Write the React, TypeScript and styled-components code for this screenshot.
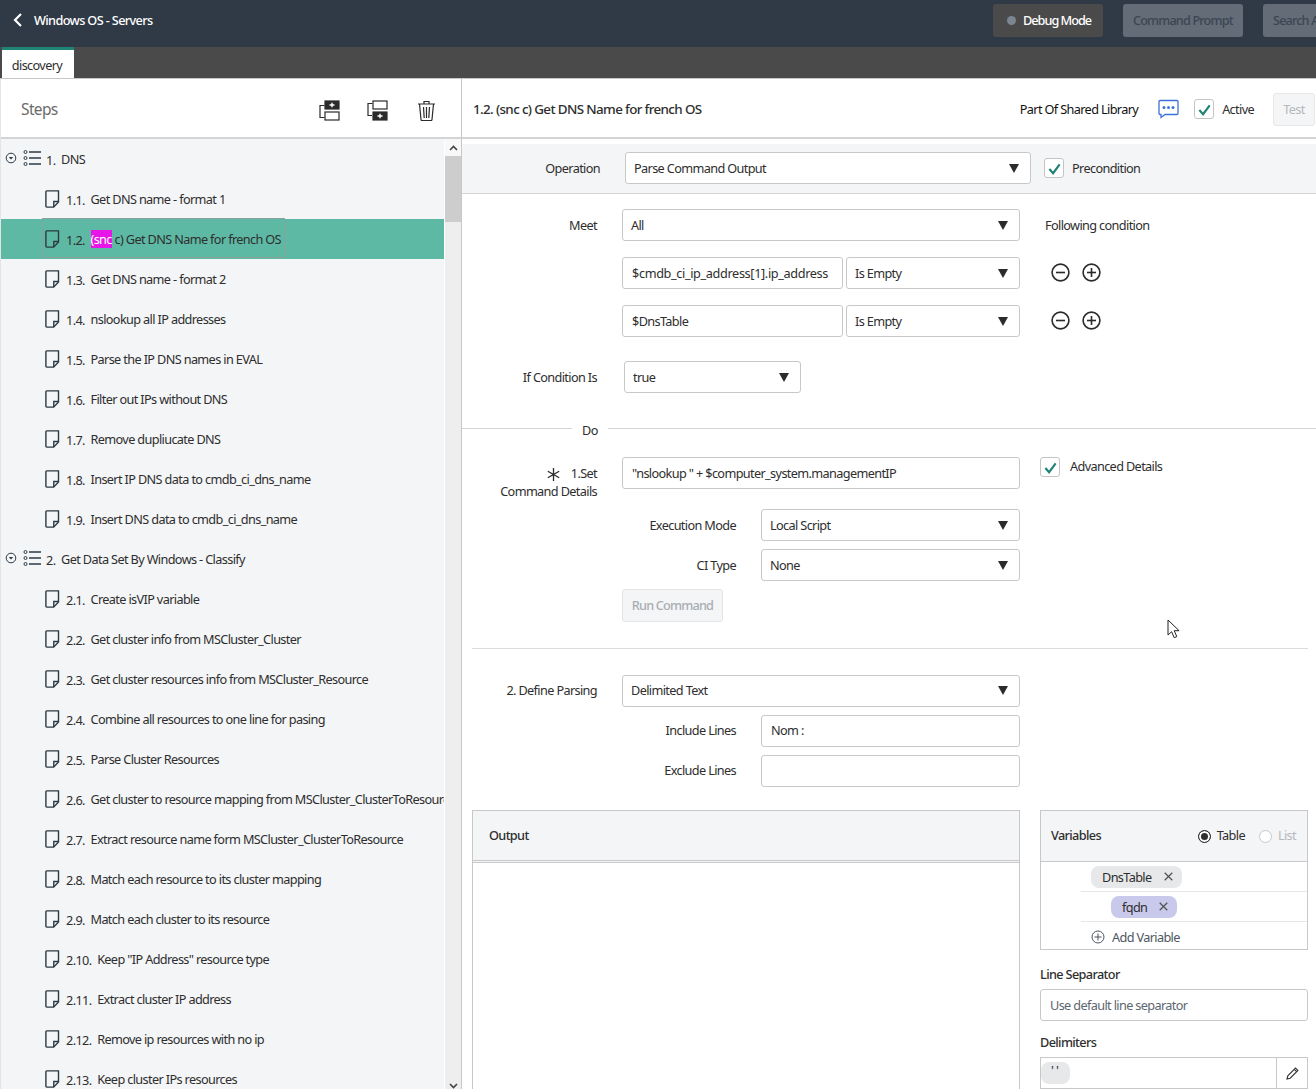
import { createGlobalStyle, styled } from "styled-components";
import { ReactNode } from "react";

const GlobalStyle = createGlobalStyle`
  html, body {
    margin: 0;
    height: 1089px;
    overflow: hidden;
    background: #fff;
  }
  body {
    font-family: "Noto Sans", "Liberation Sans", sans-serif;
    font-size: 12.7px;
    letter-spacing: -0.63px;
    color: #2e2e2e;
  }
  * { box-sizing: border-box; }
`;

const Page = styled.div`
  width: 1316px;
  height: 1089px;
  display: flex;
  flex-direction: column;
  overflow: hidden;
  position: relative;
`;

const TopBar = styled.header`
  height: 47px;
  flex: none;
  background: #303a46;
  display: flex;
  align-items: center;
  padding: 0 0 7px 13px;
  overflow: hidden;
`;

const BackLink = styled.a`
  width: 980px;
  flex: none;
  display: flex;
  align-items: center;
  gap: 12px;
  color: #fff;
  font-weight: 500;
`;

const DebugButton = styled.button`
  width: 110px;
  height: 33px;
  flex: none;
  margin-right: 20px;
  padding: 0 0 0 14px;
  background: #4a4a4a;
  border: 0;
  border-radius: 3px;
  color: #fff;
  font: inherit;
  font-weight: 500;
  letter-spacing: -1px;
  display: flex;
  align-items: center;
  gap: 7px;
`;

const Dot = styled.span`
  width: 9px;
  height: 9px;
  border-radius: 50%;
  background: #7c8591;
`;

const DimButton = styled.button`
  width: 120px;
  height: 33px;
  flex: none;
  margin-right: 20px;
  background: #636c77;
  border: 0;
  border-radius: 3px;
  color: #3c4652;
  font: inherit;
  font-weight: 500;
  letter-spacing: -0.85px;
  white-space: nowrap;
  overflow: hidden;
  text-align: left;
  padding: 0 10px;
`;

const TabStrip = styled.nav`
  height: 32px;
  flex: none;
  background: #4a4a4a;
  border-bottom: 1px solid #c8c8c8;
  padding-left: 2px;
`;

const Tab = styled.div`
  width: 72px;
  height: 31px;
  padding-right: 2px;
  background: #fff;
  border-top: 3px solid #1f8476;
  text-align: center;
  line-height: 30px;
  color: #2e2e2e;
`;

const Main = styled.div`
  flex: 1;
  min-height: 0;
  display: flex;
`;

const LeftPane = styled.aside`
  width: 462px;
  flex: none;
  display: flex;
  flex-direction: column;
  border-left: 1px solid #e4e4e4;
  border-right: 1px solid #c8c8c8;
`;

const PaneHead = styled.div`
  height: 60px;
  flex: none;
  padding-top: 2px;
  background: #fff;
  border-bottom: 2px solid #d4d4d4;
  display: flex;
  align-items: center;
`;

const StepsTitle = styled.h2`
  margin: 0 auto 0 20px;
  font-size: 15.5px;
  font-weight: 400;
  color: #6b6b6b;
`;

const HeadIcon = styled.span`
  width: 48px;
  display: flex;
  justify-content: center;
  position: relative;
  top: 1px;
  left: -1px;
  &:last-child { margin-right: 11px; left: 0; }
`;

const StepsBody = styled.div`
  flex: 1;
  min-height: 0;
  display: flex;
`;

const StepList = styled.ul`
  flex: 1;
  min-width: 0;
  margin: 0;
  padding: 0;
  list-style: none;
  background: #f4f5f7;
  overflow: hidden;
`;

const GroupRow = styled.li`
  height: 40px;
  display: flex;
  align-items: center;
  padding-left: 4px;
  white-space: nowrap;
  & > svg:first-child { margin-right: 6px; margin-top: -2px; }
  & > svg + svg { margin-right: 5px; margin-top: -2px; }
`;

const StepRow = styled.li<{ $selected?: boolean }>`
  height: 40px;
  display: flex;
  align-items: center;
  padding-left: 44px;
  white-space: nowrap;
  background: ${(p) => (p.$selected ? "#5eb9a4" : "transparent")};
  position: relative;
  & > svg { margin-right: 6px; flex: none; }
`;

const FocusRing = styled.span`
  position: absolute;
  left: 41px;
  top: -1px;
  width: 243px;
  height: 40px;
  border: 1px solid #8aa29d;
`;

const StepNum = styled.span`
  margin-right: 3px;
  position: relative;
  top: 1px;
`;

const Hit = styled.mark`
  background: #e815e8;
  color: #fff;
`;

const ScrollTrack = styled.div`
  width: 17px;
  height: calc(100% + 5px);
  flex: none;
  border-left: 1px solid #fff;
  background: #eeeeee;
  display: flex;
  flex-direction: column;
`;

const ScrollArrow = styled.span<{ $top?: boolean }>`
  height: 17px;
  flex: none;
  background: ${(p) => (p.$top ? "#f8f8f8" : "transparent")};
  display: flex;
  align-items: center;
  justify-content: center;
`;

const ScrollThumb = styled.span`
  height: 66px;
  flex: none;
  background: #cdcdcd;
`;

const ScrollRest = styled.span`
  flex: 1;
`;

const RightPane = styled.section`
  flex: 1;
  min-width: 0;
  display: flex;
  flex-direction: column;
  overflow: hidden;
`;

const DetailTitle = styled.h1`
  margin: 0 auto 0 11px;
  font-size: 13.4px;
  font-weight: 500;
  color: #2e2e2e;
`;

const SharedLabel = styled.span`
  color: #111;
  margin-right: 20px;
`;

const CheckBox = styled.span<{ $left?: number }>`
  width: 20px;
  height: 20px;
  flex: none;
  margin-left: ${(p) => p.$left ?? 0}px;
  border: 1px solid #c4c4c4;
  border-radius: 3px;
  background: #fff;
  display: inline-flex;
  align-items: center;
  justify-content: center;
`;

const ActiveLabel = styled.span`
  margin: 0 19px 0 8px;
`;

const TestButton = styled.button`
  width: 42px;
  height: 33px;
  flex: none;
  margin-right: 1px;
  background: #f4f5f7;
  border: 1px solid #e8e8e8;
  border-radius: 3px;
  color: #b5b8bc;
  font: inherit;
  letter-spacing: inherit;
`;

const OperationBar = styled.div`
  height: 50px;
  flex: none;
  margin-top: 5px;
  background: #f4f5f7;
  border-bottom: 1px solid #d4d4d4;
  display: flex;
  align-items: center;
  padding-bottom: 1px;
`;

const OpLabel = styled.label`
  width: 138px;
  margin-right: 25px;
  text-align: right;
  flex: none;
`;

const Box = styled.div<{ $w: number; $gap?: number }>`
  width: ${(p) => p.$w}px;
  height: 32px;
  flex: none;
  margin-left: ${(p) => p.$gap ?? 0}px;
  background: #fff;
  border: 1px solid #c8c8c8;
  border-radius: 3px;
  padding: 0 9px;
  display: flex;
  align-items: center;
  justify-content: space-between;
  white-space: nowrap;
  overflow: hidden;
`;

const SelectBox = styled(Box)`
  padding: 0 11px 0 8px;
`;

const LongValue = styled.span`
  letter-spacing: -0.36px;
`;

const Form = styled.div`
  padding-top: 15px;
`;

const Row = styled.div<{ $top?: number }>`
  display: flex;
  align-items: center;
  height: 32px;
  margin-top: ${(p) => p.$top ?? 0}px;
`;

const Label = styled.label<{ $gap?: number }>`
  width: 135px;
  flex: none;
  margin-right: ${(p) => p.$gap ?? 25}px;
  text-align: right;
`;

const SubLabel = styled(Label)`
  width: 274px;
`;

const TrailText = styled.span<{ $left?: number }>`
  margin-left: ${(p) => p.$left ?? 25}px;
`;

const RoundIcons = styled.span`
  margin: -2px 0 0 31px;
  display: flex;
  gap: 12px;
`;

const DoDivider = styled.div`
  margin-top: 35px;
  height: 1px;
  background: #d4d4d4;
  position: relative;
`;

const DoText = styled.span`
  position: absolute;
  left: 110px;
  top: -7px;
  padding: 0 10px;
  background: #fff;
`;

const SetRow = styled.div`
  display: flex;
  height: 48px;
  margin-top: 28px;
`;

const SetLabel = styled.div`
  width: 135px;
  margin-right: 25px;
  flex: none;
  text-align: right;
  line-height: 18px;
  padding-top: 7px;
`;

const Required = styled.svg`
  margin-right: 11px;
  vertical-align: -3px;
`;

const AdvancedCheck = styled.span`
  margin-left: 20px;
  display: flex;
  gap: 10px;
  height: 22px;
  align-items: flex-start;
`;

const RunButton = styled.button`
  display: block;
  width: 101px;
  height: 33px;
  margin: 8px 0 0 160px;
  padding-bottom: 2px;
  background: #f4f5f7;
  border: 1px solid #e4e4e4;
  border-radius: 3px;
  color: #a9adb2;
  font: inherit;
  font-weight: 500;
  letter-spacing: -0.8px;
`;

const Rule = styled.hr`
  margin: 26px 8px 26px 10px;
  border: 0;
  height: 1px;
  background: #dcdcdc;
`;

const ParsingRows = styled.div`
  & label, & ${Box} { padding-bottom: 2px; }
`;

const Bottom = styled.div`
  margin: 23px 8px 0 10px;
  display: grid;
  grid-template-columns: 548px 268px;
  column-gap: 20px;
`;

const OutputPanel = styled.div`
  height: 290px;
  border: 1px solid #c8c8c8;
`;

const OutputHead = styled.div`
  height: 52px;
  padding: 0 0 1px 16px;
  background: #f4f5f7;
  border-bottom: 3px double #c8c8c8;
  display: flex;
  align-items: center;
  font-weight: 500;
`;

const SideColumn = styled.div`
  display: flex;
  flex-direction: column;
`;

const VarPanel = styled.div`
  height: 140px;
  border: 1px solid #c8c8c8;
`;

const VarHead = styled.div`
  height: 51px;
  padding: 0 11px 2px 10px;
  background: #f4f5f7;
  border-bottom: 1px solid #c8c8c8;
  display: flex;
  align-items: center;
  font-weight: 500;
`;

const RadioGroup = styled.span`
  margin-left: auto;
  display: flex;
  align-items: center;
  gap: 6px;
  font-weight: 400;
`;

const Radio = styled.span<{ $on?: boolean }>`
  width: 13px;
  height: 13px;
  margin-top: 2px;
  margin-left: ${(p) => (p.$on ? 0 : 8)}px;
  border-radius: 50%;
  background: ${(p) => (p.$on ? "#2e2e2e" : "#fff")};
  border: 1px solid ${(p) => (p.$on ? "#2e2e2e" : "#c8c8c8")};
  box-shadow: ${(p) => (p.$on ? "inset 0 0 0 2px #fff" : "none")};
`;

const MutedText = styled.span`
  color: #b5b8bc;
`;

const VarRow = styled.div<{ $indent: number }>`
  height: 30px;
  margin-left: 40px;
  padding-left: ${(p) => p.$indent}px;
  border-bottom: 1px solid #e6e6e6;
  display: flex;
  align-items: center;
`;

const Chip = styled.span<{ $color: string }>`
  height: 22px;
  padding: 0 9px 0 11px;
  border-radius: 8px;
  background: ${(p) => p.$color};
  display: inline-flex;
  align-items: center;
  gap: 12px;
`;

const AddRow = styled.div`
  margin-left: 50px;
  height: 29px;
  display: flex;
  align-items: center;
  gap: 7px;
  color: #4d5661;
`;

const FieldLabel = styled.div<{ $top: number }>`
  margin-top: ${(p) => p.$top}px;
  height: 18px;
  line-height: 18px;
  font-weight: 500;
`;

const LineInput = styled.div`
  margin-top: 6px;
  height: 32px;
  padding-left: 9px;
  border: 1px solid #c8c8c8;
  border-radius: 3px;
  display: flex;
  align-items: center;
  color: #5c6670;
`;

const DelimBox = styled.div`
  margin-top: 6px;
  height: 32px;
  border: 1px solid #c8c8c8;
  display: flex;
  align-items: center;
`;

const DelimChip = styled.span`
  width: 29px;
  height: 22px;
  border-radius: 8px;
  background: #e6e8ea;
  padding-left: 10px;
  line-height: 16px;
`;

const DelimEdit = styled.span`
  margin-left: auto;
  width: 31px;
  height: 100%;
  border-left: 1px solid #c8c8c8;
  display: flex;
  align-items: center;
  justify-content: center;
`;

const Pointer = styled.svg`
  position: absolute;
  left: 1167px;
  top: 619px;
`;

const Caret = () => (
  <svg width="10" height="9" viewBox="0 0 10 9">
    <path d="M0 0h10L5 9z" fill="#2b2b2b" />
  </svg>
);

const Check = () => (
  <svg width="15" height="15" viewBox="0 0 16 16" fill="none">
    <path d="M2.5 8.5 6.5 13 13.5 3.5" stroke="#1f8476" strokeWidth="2.3" />
  </svg>
);

const DocIcon = () => (
  <svg width="15" height="18" viewBox="0 0 15 18" fill="none" stroke="#2c3a44" strokeWidth="1.4">
    <path d="M1.7.9h11.8v11l-4.8 5.2H1.7a.8.8 0 0 1-.8-.8V1.7a.8.8 0 0 1 .8-.8z" />
    <path d="M13.5 11.5H8.8V17" />
  </svg>
);

const ExpandIcon = () => (
  <svg width="12" height="12" viewBox="0 0 12 12" fill="none">
    <circle cx="6" cy="6" r="4.8" stroke="#2c3a44" />
    <path d="M3.8 5h4.4L6 7.6z" fill="#2c3a44" />
  </svg>
);

const ListIcon = () => (
  <svg width="18" height="16" viewBox="0 0 18 16" fill="none" stroke="#2c3a44">
    <circle cx="2.5" cy="2" r="1.5" />
    <circle cx="2.5" cy="8" r="1.5" />
    <circle cx="2.5" cy="14" r="1.5" />
    <path d="M6 2h12M6 8h12M6 14h12" strokeWidth="1.6" />
  </svg>
);

const InsertIcon = ({ below }: { below?: boolean }) => (
  <svg width="21" height="21" viewBox="0 0 21 21" fill="none" stroke="#2b2b2b" strokeWidth="1.2">
    <path d={below ? "M5.5 3.5H1v12h4" : "M5.5 5.5H1v12h4.5"} />
    {below ? (
      <>
        <rect x="6" y="1" width="14" height="8" fill="#fff" />
        <rect x="6" y="12" width="14" height="8" fill="#2b2b2b" />
        <path d="M10.5 16h5M13 13.8v4.4" stroke="#fff" strokeWidth="1.4" />
      </>
    ) : (
      <>
        <rect x="6" y="1" width="14" height="8" fill="#2b2b2b" />
        <rect x="6" y="12" width="14" height="8" fill="#fff" />
        <path d="M10.5 5h5M13 2.8v4.4" stroke="#fff" strokeWidth="1.4" />
      </>
    )}
  </svg>
);

const TrashIcon = () => (
  <svg width="19" height="21" viewBox="0 0 19 21" fill="none" stroke="#2b2b2b" strokeWidth="1.2">
    <path d="M1 4h17M7 4V1.5h5V4" />
    <path d="M2.5 4 4 19.5a1 1 0 0 0 1 1h9a1 1 0 0 0 1-1L16.5 4" />
    <path d="M6.5 7l.7 11M9.5 7v11M12.5 7l-.7 11" />
  </svg>
);

const CommentIcon = () => (
  <svg width="21" height="20" viewBox="0 0 21 20" fill="none">
    <path
      d="M2 1.5h17a1 1 0 0 1 1 1v12a1 1 0 0 1-1 1H7L3 18.5v-3H2a1 1 0 0 1-1-1v-12a1 1 0 0 1 1-1z"
      stroke="#3f72d8"
      strokeWidth="1.3"
    />
    <circle cx="6" cy="8.5" r="1.5" fill="#3f72d8" />
    <circle cx="10.5" cy="8.5" r="1.5" fill="#3f72d8" />
    <circle cx="15" cy="8.5" r="1.5" fill="#3f72d8" />
  </svg>
);

const RoundIcon = ({ plus }: { plus?: boolean }) => (
  <svg width="19" height="19" viewBox="0 0 19 19" fill="none" stroke="#2b2b2b" strokeWidth="1.6">
    <circle cx="9.5" cy="9.5" r="8.4" />
    <path d="M5 9.5h9" />
    {plus && <path d="M9.5 5v9" />}
  </svg>
);

const CloseIcon = () => (
  <svg width="9" height="9" viewBox="0 0 9 9" stroke="#555" strokeWidth="1.3">
    <path d="M.7.7l7.6 7.6M8.3.7.7 8.3" />
  </svg>
);

const PencilIcon = () => (
  <svg width="13" height="13" viewBox="0 0 13 13" fill="none" stroke="#333" strokeWidth="1.1">
    <path d="M1 12l.8-3.2L9.5 1.1l2.4 2.4-7.7 7.7zM8.3 2.4l2.4 2.4" />
  </svg>
);

const Select = ({ w, gap, children }: { w: number; gap?: number; children: ReactNode }) => (
  <SelectBox $w={w} $gap={gap}>
    {children}
    <Caret />
  </SelectBox>
);

const groups = [
  {
    num: "1.",
    name: "DNS",
    steps: [
      "Get DNS name - format 1",
      "c) Get DNS Name for french OS",
      "Get DNS name - format 2",
      "nslookup all IP addresses",
      "Parse the IP DNS names in EVAL",
      "Filter out IPs without DNS",
      "Remove dupliucate DNS",
      "Insert IP DNS data to cmdb_ci_dns_name",
      "Insert DNS data to cmdb_ci_dns_name",
    ],
  },
  {
    num: "2.",
    name: "Get Data Set By Windows - Classify",
    steps: [
      "Create isVIP variable",
      "Get cluster info from MSCluster_Cluster",
      "Get cluster resources info from MSCluster_Resource",
      "Combine all resources to one line for pasing",
      "Parse Cluster Resources",
      "Get cluster to resource mapping from MSCluster_ClusterToResource",
      "Extract resource name form MSCluster_ClusterToResource",
      "Match each resource to its cluster mapping",
      "Match each cluster to its resource",
      'Keep "IP Address" resource type',
      "Extract cluster IP address",
      "Remove ip resources with no ip",
      "Keep cluster IPs resources",
    ],
  },
];

export default function App() {
  return (
    <>
      <GlobalStyle />
      <Page>
        <TopBar>
          <BackLink>
            <svg width="9" height="14" viewBox="0 0 9 14" fill="none" stroke="#fff" strokeWidth="2.2">
              <path d="M8 1 2 7l6 6" />
            </svg>
            Windows OS - Servers
          </BackLink>
          <DebugButton>
            <Dot />
            Debug Mode
          </DebugButton>
          <DimButton>Command Prompt</DimButton>
          <DimButton>Search Artifacts</DimButton>
        </TopBar>
        <TabStrip>
          <Tab>discovery</Tab>
        </TabStrip>
        <Main>
          <LeftPane>
            <PaneHead>
              <StepsTitle>Steps</StepsTitle>
              <HeadIcon>
                <InsertIcon />
              </HeadIcon>
              <HeadIcon>
                <InsertIcon below />
              </HeadIcon>
              <HeadIcon>
                <TrashIcon />
              </HeadIcon>
            </PaneHead>
            <StepsBody>
              <StepList>
                {groups.map((g) => (
                  <div key={g.num}>
                    <GroupRow>
                      <ExpandIcon />
                      <ListIcon />
                      <StepNum>{g.num}</StepNum>&nbsp;{g.name}
                    </GroupRow>
                    {g.steps.map((s, i) => {
                      const selected = g.num === "1." && i === 1;
                      return (
                        <StepRow key={s} $selected={selected}>
                          {selected && <FocusRing />}
                          <DocIcon />
                          <StepNum>
                            {g.num}
                            {i + 1}.
                          </StepNum>
                          &nbsp;
                          {selected && (
                            <>
                              <Hit>(snc</Hit>&nbsp;
                            </>
                          )}
                          {s}
                        </StepRow>
                      );
                    })}
                  </div>
                ))}
              </StepList>
              <ScrollTrack>
                <ScrollArrow $top>
                  <svg width="9" height="6" viewBox="0 0 9 6" fill="none" stroke="#444" strokeWidth="1.6">
                    <path d="M1 5l3.5-3.5L8 5" />
                  </svg>
                </ScrollArrow>
                <ScrollThumb />
                <ScrollRest />
                <ScrollArrow>
                  <svg width="9" height="6" viewBox="0 0 9 6" fill="none" stroke="#444" strokeWidth="1.6">
                    <path d="M1 1l3.5 3.5L8 1" />
                  </svg>
                </ScrollArrow>
              </ScrollTrack>
            </StepsBody>
          </LeftPane>
          <RightPane>
            <PaneHead>
              <DetailTitle>1.2. (snc c) Get DNS Name for french OS</DetailTitle>
              <SharedLabel>Part Of Shared Library</SharedLabel>
              <CommentIcon />
              <CheckBox $left={15}>
                <Check />
              </CheckBox>
              <ActiveLabel>Active</ActiveLabel>
              <TestButton>Test</TestButton>
            </PaneHead>
            <OperationBar>
              <OpLabel>Operation</OpLabel>
              <Select w={406}>Parse Command Output</Select>
              <CheckBox $left={13}>
                <Check />
              </CheckBox>
              <TrailText $left={8}>Precondition</TrailText>
            </OperationBar>
            <Form>
              <Row>
                <Label>Meet</Label>
                <Select w={398}>All</Select>
                <TrailText>Following condition</TrailText>
              </Row>
              <Row $top={16}>
                <Label />
                <Box $w={221}>
                  <LongValue>$cmdb_ci_ip_address[1].ip_address</LongValue>
                </Box>
                <Select w={174} gap={3}>
                  Is Empty
                </Select>
                <RoundIcons>
                  <RoundIcon />
                  <RoundIcon plus />
                </RoundIcons>
              </Row>
              <Row $top={16}>
                <Label />
                <Box $w={221}>$DnsTable</Box>
                <Select w={174} gap={3}>
                  Is Empty
                </Select>
                <RoundIcons>
                  <RoundIcon />
                  <RoundIcon plus />
                </RoundIcons>
              </Row>
              <Row $top={24}>
                <Label $gap={27}>If Condition Is</Label>
                <Select w={177}>true</Select>
              </Row>
              <DoDivider>
                <DoText>Do</DoText>
              </DoDivider>
              <SetRow>
                <SetLabel>
                  <Required width="13" height="13" viewBox="0 0 13 13" stroke="#2b2b2b" strokeWidth="1.3">
                    <path d="M6.5 0v13M.8 3.2l11.4 6.6M12.2 3.2.8 9.8" />
                  </Required>
                  1.Set
                  <br />
                  Command Details
                </SetLabel>
                <Box $w={398}>"nslookup " + $computer_system.managementIP</Box>
                <AdvancedCheck>
                  <CheckBox>
                    <Check />
                  </CheckBox>
                  Advanced Details
                </AdvancedCheck>
              </SetRow>
              <Row $top={4}>
                <SubLabel>Execution Mode</SubLabel>
                <Select w={259}>Local Script</Select>
              </Row>
              <Row $top={8}>
                <SubLabel>CI Type</SubLabel>
                <Select w={259}>None</Select>
              </Row>
              <RunButton>Run Command</RunButton>
              <Rule />
              <ParsingRows>
                <Row>
                  <Label>2. Define Parsing</Label>
                  <Select w={398}>Delimited Text</Select>
                </Row>
                <Row $top={8}>
                  <SubLabel>Include Lines</SubLabel>
                  <Box $w={259}>Nom :</Box>
                </Row>
                <Row $top={8}>
                  <SubLabel>Exclude Lines</SubLabel>
                  <Box $w={259} />
                </Row>
              </ParsingRows>
              <Bottom>
                <OutputPanel>
                  <OutputHead>Output</OutputHead>
                </OutputPanel>
                <SideColumn>
                  <VarPanel>
                    <VarHead>
                      Variables
                      <RadioGroup>
                        <Radio $on />
                        Table
                        <Radio />
                        <MutedText>List</MutedText>
                      </RadioGroup>
                    </VarHead>
                    <VarRow $indent={10}>
                      <Chip $color="#e6e8ea">
                        DnsTable
                        <CloseIcon />
                      </Chip>
                    </VarRow>
                    <VarRow $indent={30}>
                      <Chip $color="#c9c9ec">
                        fqdn
                        <CloseIcon />
                      </Chip>
                    </VarRow>
                    <AddRow>
                      <svg width="14" height="14" viewBox="0 0 14 14" fill="none" stroke="#4d5661">
                        <circle cx="7" cy="7" r="6" />
                        <path d="M3.5 7h7M7 3.5v7" />
                      </svg>
                      Add Variable
                    </AddRow>
                  </VarPanel>
                  <FieldLabel $top={15}>Line Separator</FieldLabel>
                  <LineInput>Use default line separator</LineInput>
                  <FieldLabel $top={12}>Delimiters</FieldLabel>
                  <DelimBox>
                    <DelimChip>' '</DelimChip>
                    <DelimEdit>
                      <PencilIcon />
                    </DelimEdit>
                  </DelimBox>
                </SideColumn>
              </Bottom>
            </Form>
          </RightPane>
        </Main>
        <Pointer width="13" height="20" viewBox="0 0 13 20">
          <path d="M1 1v15l3.6-3.3 2.6 6 2.6-1.1-2.6-5.9h4.9z" fill="#fff" stroke="#222" strokeWidth="1" />
        </Pointer>
      </Page>
    </>
  );
}
